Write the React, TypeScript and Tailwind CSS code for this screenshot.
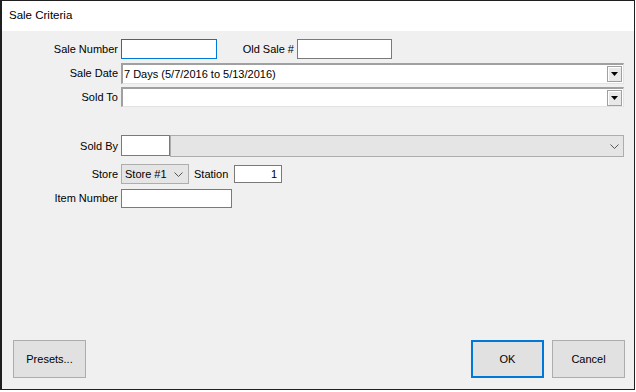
import React from 'react';

const DownTriangle = () => (
  <svg width="7" height="4" viewBox="0 0 7 4">
    <path d="M0 0h7L3.5 4z" fill="#000" />
  </svg>
);

const Chevron = () => (
  <svg width="9" height="5" viewBox="0 0 9 5">
    <path d="M0.5 0.5L4.5 4.5L8.5 0.5" fill="none" stroke="#555" strokeWidth="1" />
  </svg>
);

const Label = ({ text, width = 'w-[119px]' }: { text: string; width?: string }) => (
  <div className={`${width} shrink-0 text-right pr-[3px] text-[11px] text-black leading-none`}>{text}</div>
);

const OldCombo = ({ value, height }: { value?: string; height: string }) => (
  <div className={`w-[503px] ${height} flex items-center bg-white border-t-2 border-l-2 border-b border-r border-t-[#a0a0a0] border-l-[#a0a0a0] border-b-[#e3e3e3] border-r-[#e3e3e3]`}>
    <div className="flex-1 pl-[1px] text-[11px] text-black leading-none whitespace-nowrap">{value}</div>
    <div className="w-[15px] h-[16px] mr-[1px] flex items-center justify-center bg-[#e8e8e8] border border-[#a0a0a0] shadow-[inset_1px_1px_0_#ffffff]">
      <DownTriangle />
    </div>
  </div>
);

const App = () => {
  return (
    <div className="w-[636px] h-[392px] bg-white font-['Liberation_Sans',Arial,sans-serif]">
      <div className="w-[635px] h-[390px] flex flex-col border border-l-2 border-[#1f1f1f]">
        <div className="h-[30px] shrink-0 flex items-center pl-[7px] bg-white text-[11.5px] text-black">Sale Criteria</div>
        <div className="flex-1 flex flex-col bg-[#f0f0f0]">
          <div className="flex items-center pt-[8px]">
            <Label text="Sale Number" />
            <div className="w-[96px] h-[20px] bg-white border border-[#0078d7]" />
            <Label text="Old Sale #" width="w-[80px]" />
            <div className="w-[95px] h-[20px] bg-white border border-[#7a7a7a]" />
          </div>
          <div className="flex items-center mt-[4px]">
            <Label text="Sale Date" />
            <OldCombo value="7 Days (5/7/2016 to 5/13/2016)" height="h-[21px]" />
          </div>
          <div className="flex items-center mt-[3px]">
            <Label text="Sold To" />
            <OldCombo height="h-[20px]" />
          </div>
          <div className="flex items-center mt-[28px]">
            <Label text="Sold By" />
            <div className="w-[49px] h-[21px] bg-white border border-[#7a7a7a] self-start" />
            <div className="w-[454px] h-[22px] flex items-center justify-end pr-[4px] bg-[#e5e5e5] border border-[#adadad]">
              <Chevron />
            </div>
          </div>
          <div className="flex items-center mt-[7px]">
            <Label text="Store" />
            <div className="w-[68px] h-[20px] flex items-center justify-between pl-[3px] pr-[5px] bg-[#e5e5e5] border border-[#adadad] text-[11px] text-black">
              <span>Store #1</span>
              <Chevron />
            </div>
            <div className="ml-[5px] w-[40px] text-[11px] text-black">Station</div>
            <div className="w-[48px] h-[18px] flex items-center justify-end pr-[4px] bg-white border border-[#7a7a7a] text-[11px] text-black">1</div>
          </div>
          <div className="flex items-center mt-[5px]">
            <Label text="Item Number" />
            <div className="w-[111px] h-[19px] bg-white border border-[#7a7a7a]" />
          </div>
          <div className="flex-1" />
          <div className="flex items-center justify-between pl-[11px] pr-[9px] pb-[11px]">
            <button type="button" className="w-[73px] h-[38px] bg-[#e1e1e1] border border-[#adadad] text-[11px] text-black">Presets...</button>
            <div className="flex gap-[8px]">
              <button type="button" className="w-[73px] h-[38px] bg-[#e1e1e1] border-2 border-[#0078d7] text-[11px] text-black">OK</button>
              <button type="button" className="w-[73px] h-[38px] bg-[#e1e1e1] border border-[#adadad] text-[11px] text-black">Cancel</button>
            </div>
          </div>
        </div>
      </div>
    </div>
  );
};

export default App;
